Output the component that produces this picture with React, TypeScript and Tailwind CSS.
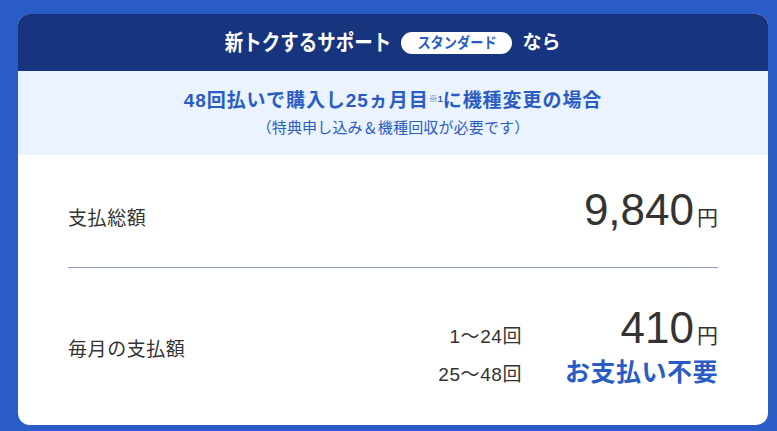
const font = "font-['Liberation_Sans','Noto_Sans_CJK_JP',sans-serif]";

const Header = () => (
  <div className="flex h-[57px] items-center justify-center gap-[10px] bg-[#17347f] text-white">
    <div className="flex w-[166px] justify-center">
      <span className="inline-block scale-x-[0.84] whitespace-nowrap text-[22px] font-bold leading-none">
        新トクするサポート
      </span>
    </div>
    <div className="flex h-[22px] w-[111px] items-center justify-center rounded-full bg-white text-[#2a5cc5]">
      <span className="inline-block scale-x-[0.88] whitespace-nowrap text-[15px] font-bold leading-none">
        スタンダード
      </span>
    </div>
    <span className="text-[19px] font-bold leading-none">なら</span>
  </div>
);

const Condition = () => (
  <div className="flex h-[84px] flex-col items-center justify-center bg-[#ebf3ff] text-[#2a5cc5]">
    <p className="text-[19px] font-bold leading-[26px] tracking-[0.05em]">
      48回払いで購入し25ヵ月目
      <sup className="text-[9px] tracking-normal">※1</sup>
      に機種変更の場合
    </p>
    <p className="mt-[3px] text-[15px] leading-[22px] tracking-[0.01em]">
      （特典申し込み＆機種回収が必要です）
    </p>
  </div>
);

const Yen = ({ value }: { value: string }) => (
  <span className="flex items-baseline justify-end text-[#333]">
    <span className="text-[44px] leading-none">{value}</span>
    <span className="ml-[3px] text-[21px] leading-none">円</span>
  </span>
);

export default function App() {
  return (
    <div className={`min-h-screen bg-[#2a5cc5] pl-[18px] pt-[14px] ${font}`}>
      <div className="flex h-[411px] w-[750px] flex-col overflow-hidden rounded-[12px] bg-white">
        <Header />
        <Condition />

        <div className="flex flex-1 flex-col px-[50px]">
          <div className="flex h-[112px] items-baseline justify-between pt-[33px]">
            <span className="text-[19px] leading-none tracking-[0.03em] text-[#333]">
              支払総額
            </span>
            <Yen value="9,840" />
          </div>

          <div className="h-px bg-[#8e9cbf]" />

          <div className="flex flex-1 items-center justify-between">
            <span className="mt-[6px] text-[19px] leading-none tracking-[0.03em] text-[#333]">
              毎月の支払額
            </span>
            <div className="grid grid-cols-[auto_auto] items-baseline gap-x-[43px] gap-y-[7px] text-right">
              <span className="text-[19px] leading-none tracking-[0.03em] text-[#333]">
                1〜24回
              </span>
              <Yen value="410" />
              <span className="text-[19px] leading-none tracking-[0.03em] text-[#333]">
                25〜48回
              </span>
              <span className="text-[25px] font-bold leading-[30px] tracking-[0.02em] text-[#2a5cc5]">
                お支払い不要
              </span>
            </div>
          </div>
        </div>
      </div>
    </div>
  );
}
